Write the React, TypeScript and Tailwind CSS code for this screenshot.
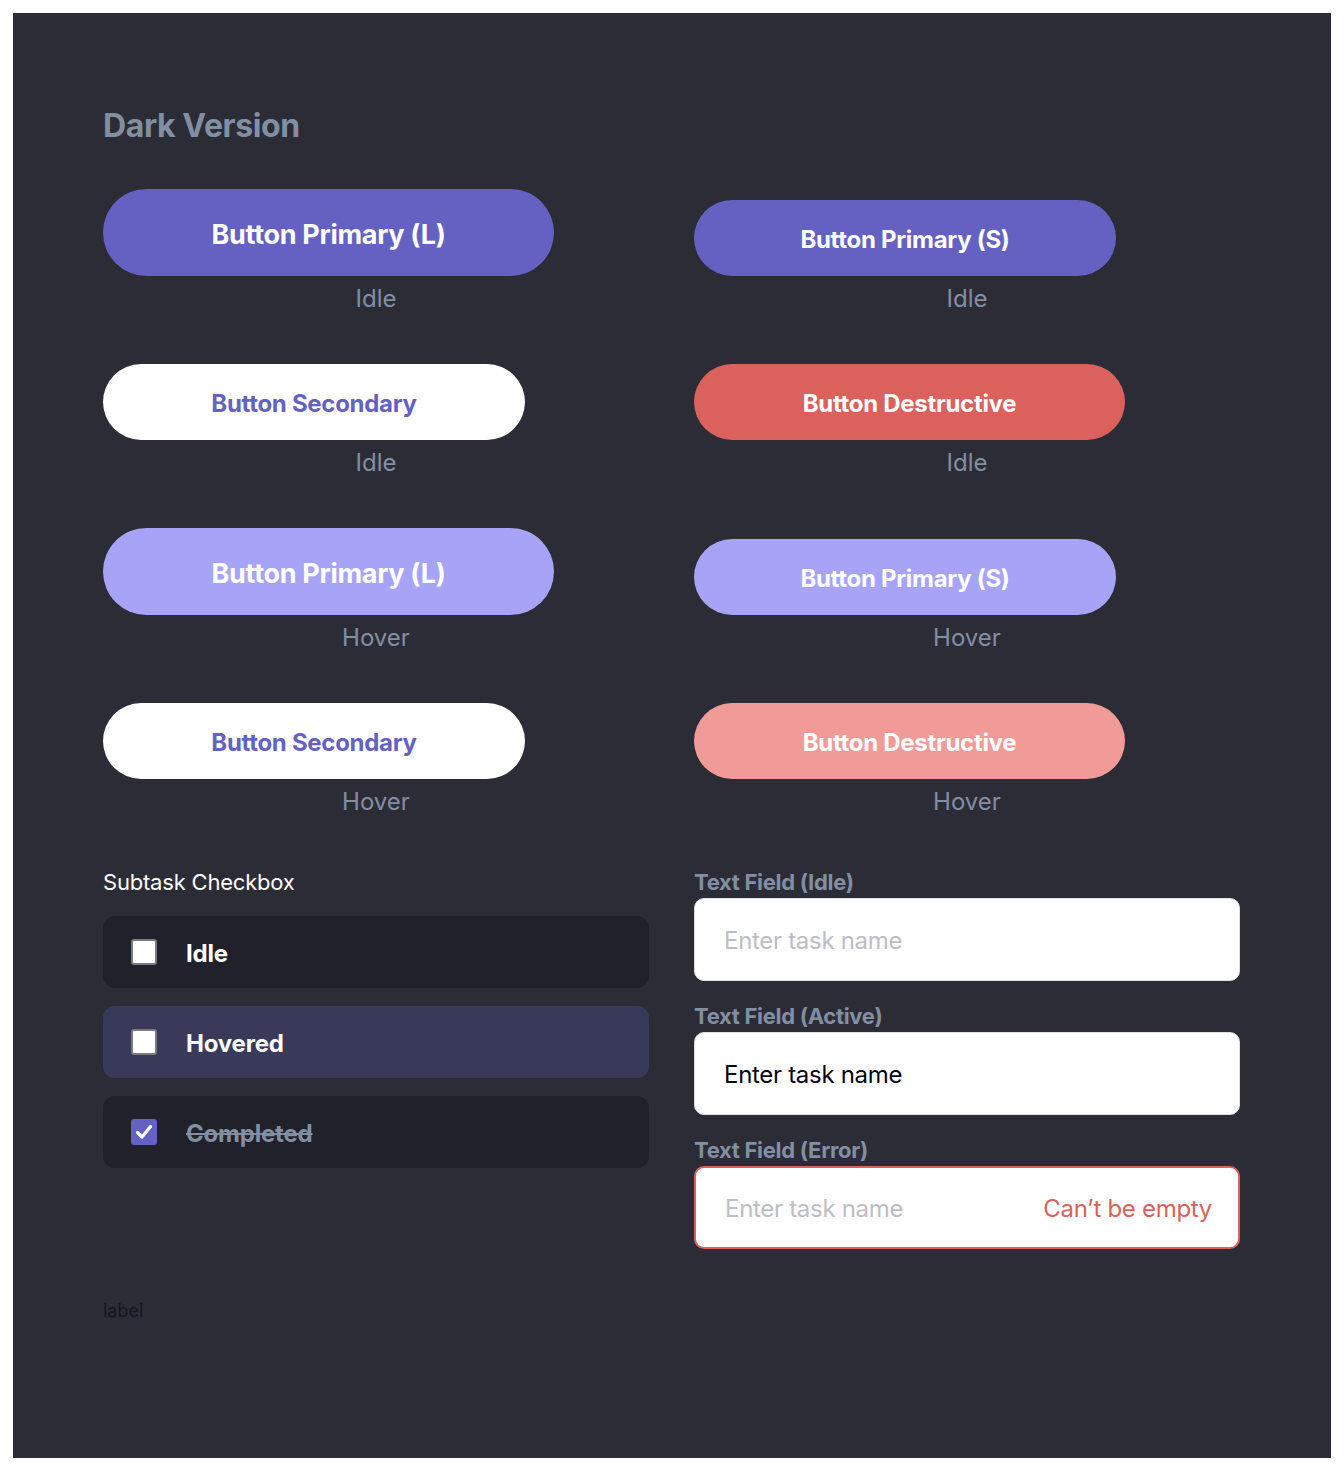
import React from "react";

const FONT = "font-['Inter','Lato','Noto_Sans',sans-serif]";

type BtnKind = "primary" | "primaryHover" | "secondary" | "destructive" | "destructiveHover";
type BtnSize = "L" | "S";

const KIND: Record<BtnKind, string> = {
  primary: "bg-[#6461c3] text-white",
  primaryHover: "bg-[#a7a4f7] text-white",
  secondary: "bg-white text-[#6461c3]",
  destructive: "bg-[#da615c] text-white",
  destructiveHover: "bg-[#f09b98] text-white",
};

function DemoButton({
  label,
  kind,
  size,
  width,
  state,
}: {
  label: string;
  kind: BtnKind;
  size: BtnSize;
  width: string;
  state: string;
}) {
  const sizeCls =
    size === "L"
      ? "h-[87px] pt-[5px] text-[27px] tracking-[-0.3px]"
      : "h-[76px] pt-[4px] text-[24px] tracking-[-0.3px]";
  return (
    <div className="flex w-[546px] flex-col items-start">
      <button
        className={`${KIND[kind]} ${sizeCls} ${width} flex items-center justify-center rounded-full font-bold`}
      >
        {label}
      </button>
      <div className="mt-[8px] w-full text-center text-[24px] leading-[30px] text-[#828fa3]">
        {state}
      </div>
    </div>
  );
}

function Checkbox({ checked }: { checked?: boolean }) {
  if (checked) {
    return (
      <span className="flex h-[26px] w-[26px] items-center justify-center rounded-[3px] bg-[#6461c3]">
        <svg width="18" height="16" viewBox="0 0 18 16" fill="none">
          <path
            d="M2.5 8.5 L7 13 L15.5 2.5"
            stroke="white"
            strokeWidth="3.2"
            strokeLinecap="round"
            strokeLinejoin="round"
          />
        </svg>
      </span>
    );
  }
  return <span className="h-[26px] w-[26px] rounded-[3px] border-2 border-[#7a7a80] bg-white" />;
}

function SubtaskRow({ label, hovered, done }: { label: string; hovered?: boolean; done?: boolean }) {
  return (
    <div
      className={`flex h-[72px] w-[546px] items-center gap-[29px] rounded-[12px] pl-[28px] ${
        hovered ? "bg-[#393a5a]" : "bg-[#21212c]"
      }`}
    >
      <Checkbox checked={done} />
      <span
        className={`pt-[3px] text-[24px] font-bold tracking-[-0.2px] ${
          done ? "text-[#828fa3] line-through decoration-2" : "text-white"
        }`}
      >
        {label}
      </span>
    </div>
  );
}

function TextField({
  title,
  value,
  placeholder,
  error,
}: {
  title: string;
  value?: string;
  placeholder?: string;
  error?: string;
}) {
  return (
    <div className="flex w-[546px] flex-col">
      <div className="text-[22px] font-bold leading-[28px] tracking-[-0.3px] text-[#828fa3]">{title}</div>
      <div
        className={`mt-[2px] flex h-[83px] items-center justify-between rounded-[10px] bg-white pl-[29px] pr-[26px] pt-[3px] ${
          error ? "border-2 border-[#da615c]" : "border border-[#dfe0e6]"
        }`}
      >
        <span className={`text-[24px] tracking-[-0.3px] ${value ? "text-[#000112]" : "text-[#bdbdc3]"}`}>
          {value ?? placeholder}
        </span>
        {error && <span className="text-[24px] tracking-[-0.3px] text-[#da615c]">{error}</span>}
      </div>
    </div>
  );
}

export default function App() {
  return (
    <div className={`${FONT} min-h-[1470px] w-[1344px] bg-white pl-[13px] pt-[13px]`}>
      <div className="flex h-[1445px] w-[1318px] flex-col bg-[#2c2c37] pl-[90px] pt-[93px]">
        <h1 className="text-[32px] font-bold leading-[40px] tracking-[-0.4px] text-[#828fa3]">Dark Version</h1>

        <div className="mt-[43px] grid grid-cols-[546px_546px] items-end gap-x-[45px] gap-y-[50px]">
          <DemoButton label="Button Primary (L)" kind="primary" size="L" width="w-[451px]" state="Idle" />
          <DemoButton label="Button Primary (S)" kind="primary" size="S" width="w-[422px]" state="Idle" />
          <DemoButton label="Button Secondary" kind="secondary" size="S" width="w-[422px]" state="Idle" />
          <DemoButton label="Button Destructive" kind="destructive" size="S" width="w-[431px]" state="Idle" />
          <DemoButton label="Button Primary (L)" kind="primaryHover" size="L" width="w-[451px]" state="Hover" />
          <DemoButton label="Button Primary (S)" kind="primaryHover" size="S" width="w-[422px]" state="Hover" />
          <DemoButton label="Button Secondary" kind="secondary" size="S" width="w-[422px]" state="Hover" />
          <DemoButton label="Button Destructive" kind="destructiveHover" size="S" width="w-[431px]" state="Hover" />
        </div>

        <div className="mt-[51px] grid grid-cols-[546px_546px] items-start gap-x-[45px]">
          <div className="flex flex-col">
            <div className="text-[22px] leading-[28px] tracking-[-0.2px] text-white">Subtask Checkbox</div>
            <div className="mt-[20px] flex flex-col gap-[18px]">
              <SubtaskRow label="Idle" />
              <SubtaskRow label="Hovered" hovered />
              <SubtaskRow label="Completed" done />
            </div>
          </div>
          <div className="flex flex-col gap-[21px]">
            <TextField title="Text Field (Idle)" placeholder="Enter task name" />
            <TextField title="Text Field (Active)" value="Enter task name" />
            <TextField title="Text Field (Error)" placeholder="Enter task name" error="Can’t be empty" />
          </div>
        </div>

        <div className="mt-[51px] text-[18px] leading-[22px] text-[#16161c]">label</div>
      </div>
    </div>
  );
}
